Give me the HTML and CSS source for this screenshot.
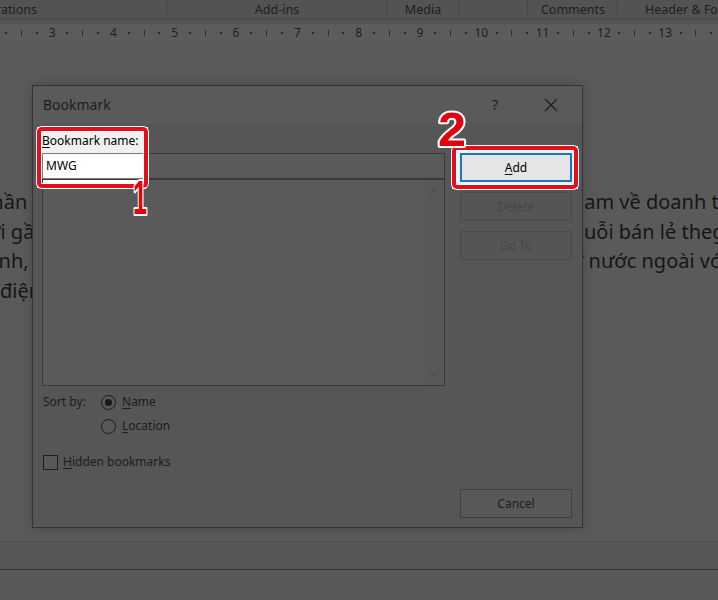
FILE: index.html
```html
<!DOCTYPE html>
<html lang="vi">
<head>
<meta charset="utf-8">
<title>Bookmark</title>
<link rel="stylesheet" href="styles.css">
</head>
<body>
<div class="app">
  <div class="ribbon">
    <div class="grp g1"><span class="grp-label cut">rations</span></div>
    <div class="grp g2"><span class="grp-label">Add-ins</span></div>
    <div class="grp g3"><span class="grp-label">Media</span></div>
    <div class="grp g4"></div>
    <div class="grp g5"><span class="grp-label">Comments</span></div>
    <div class="grp g6"><span class="grp-label">Header &amp; Footer</span></div>
  </div>
  <div class="ribbon-gap"></div>
  <div class="ruler">
    <span class="rc d"></span><span class="rc t"></span><span class="rc d"></span><span class="rc n">3</span>
    <span class="rc d"></span><span class="rc t"></span><span class="rc d"></span><span class="rc n">4</span>
    <span class="rc d"></span><span class="rc t"></span><span class="rc d"></span><span class="rc n">5</span>
    <span class="rc d"></span><span class="rc t"></span><span class="rc d"></span><span class="rc n">6</span>
    <span class="rc d"></span><span class="rc t"></span><span class="rc d"></span><span class="rc n">7</span>
    <span class="rc d"></span><span class="rc t"></span><span class="rc d"></span><span class="rc n">8</span>
    <span class="rc d"></span><span class="rc t"></span><span class="rc d"></span><span class="rc n">9</span>
    <span class="rc d"></span><span class="rc t"></span><span class="rc d"></span><span class="rc n">10</span>
    <span class="rc d"></span><span class="rc t"></span><span class="rc d"></span><span class="rc n">11</span>
    <span class="rc d"></span><span class="rc t"></span><span class="rc d"></span><span class="rc n">12</span>
    <span class="rc d"></span><span class="rc t"></span><span class="rc d"></span><span class="rc n">13</span>
    <span class="rc d"></span><span class="rc t"></span><span class="rc d"></span>
  </div>
  <div class="doc">
    <div class="line"><span class="lt l1">phần thị trường</span><span class="rt r1">Nam về doanh thu</span></div>
    <div class="line"><span class="lt l2">lợi gần</span><span class="rt r2">chuỗi bán lẻ thegioididong</span></div>
    <div class="line"><span class="lt l3">doanh, lợi</span><span class="rt r3">ở nước ngoài với</span></div>
    <div class="line"><span class="lt l4">điện</span><span class="rt"></span></div>
  </div>
  <div class="status"></div>
  <div class="foot"></div>
</div>

<div class="dialog">
  <div class="spot spot1"></div>
  <div class="spot spot2"></div>
  <div class="titlebar">
    <span class="title">Bookmark</span>
    <span class="tb-btn help">?</span>
    <span class="tb-btn close"><svg width="14" height="14" viewBox="0 0 14 14"><path d="M1 1L13 13M13 1L1 13" stroke="#1d1d1d" stroke-width="1.1" fill="none"/></svg></span>
  </div>
  <div class="dbody">
    <div class="left">
      <div class="name-label"><u>B</u>ookmark name:</div>
      <div class="name-field">MWG</div>
      <div class="list">
        <div class="list-area"></div>
        <div class="scroll">
          <svg width="9" height="5" viewBox="0 0 9 5"><path d="M0.5 4.5L4.5 0.5L8.5 4.5" stroke="#444" fill="none"/></svg>
          <svg width="9" height="5" viewBox="0 0 9 5"><path d="M0.5 0.5L4.5 4.5L8.5 0.5" stroke="#444" fill="none"/></svg>
        </div>
      </div>
      <div class="sort">
        <span class="sort-label">Sort by:</span>
        <div class="radios">
          <div class="radio"><span class="rb on"></span><span><u>N</u>ame</span></div>
          <div class="radio"><span class="rb"></span><span><u>L</u>ocation</span></div>
        </div>
      </div>
      <div class="check"><span class="cb"></span><span><u>H</u>idden bookmarks</span></div>
    </div>
    <div class="right">
      <div class="btn add"><span><u>A</u>dd</span></div>
      <div class="btn dis">Delete</div>
      <div class="btn dis">Go To</div>
      <div class="btn cancel">Cancel</div>
    </div>
  </div>
</div>

<div class="frame frame1"></div>
<div class="frame frame2"></div>

<svg class="marks" width="718" height="600" viewBox="0 0 718 600">
  <text class="mark" x="133" y="214" textLength="14" lengthAdjust="spacingAndGlyphs">1</text>
  <text class="mark" x="438" y="146" textLength="28" lengthAdjust="spacingAndGlyphs">2</text>
</svg>
</body>
</html>
```

FILE: styles.css
```css
html, body {
  margin: 0;
  padding: 0;
  overflow: hidden;
}

body {
  width: 718px;
  height: 600px;
  position: relative;
  background: #5a5a5a;
  font-family: "Noto Sans", "Open Sans", sans-serif;
  color: #1d1d1d;
}

.app {
  display: flex;
  flex-direction: column;
  height: 600px;
}

/* ribbon */
.ribbon {
  display: flex;
  height: 19px;
  background: #535353;
  border-bottom: 1px solid #4a4a4a;
  font-size: 12.5px;
  line-height: 19px;
  color: #1f1f1f;
  white-space: nowrap;
  overflow: hidden;
}

.grp {
  flex: 0 0 auto;
  text-align: center;
  background: linear-gradient(#464646, #464646) right top / 1px 15px no-repeat;
}

.g1 { width: 167px; text-align: left; }
.g2 { width: 220px; }
.g3 { width: 72px; }
.g4 { width: 69px; }
.g5 { width: 90px; }
.g6 { flex: 1; text-align: left; padding-left: 27px; background: none; }

.cut { display: inline-block; margin-left: -4px; }

.ribbon-gap {
  height: 4px;
  background: #565656;
}

/* ruler */
.ruler {
  display: flex;
  height: 17px;
  background: #5c5c5c;
  margin-left: -1.56px;
  color: #1f1f1f;
  font-size: 12px;
}

.rc {
  flex: 0 0 15.33px;
  display: flex;
  align-items: center;
  justify-content: center;
}

.rc.d::before {
  content: "";
  width: 2px;
  height: 2px;
  background: #2e2e2e;
}

.rc.t::before {
  content: "";
  width: 1px;
  height: 6px;
  background: #2e2e2e;
}

.rc.n {
  line-height: 17px;
}

/* document */
.doc {
  height: 500px;
  box-sizing: border-box;
  padding-top: 146px;
  background: #5a5a5a;
  font-size: 20px;
  color: #161616;
}

.line {
  display: grid;
  grid-template-columns: 583px minmax(0, 1fr);
  height: 29.5px;
  line-height: 29.5px;
  white-space: nowrap;
}

.lt, .rt { display: block; }
.l1 { margin-left: -21px; }
.l2 { margin-left: -17px; }
.l3 { margin-left: -37px; }
.l4 { margin-left: 0; }
.r1 { margin-left: -14px; }
.r2 { margin-left: -21px; }
.r3 { margin-left: -12px; }

.status {
  height: 27px;
  background: #575757;
  border-top: 1px solid #4f4f4f;
  border-bottom: 1px solid #333;
}

.foot {
  flex: 1;
  background: #595959;
}

/* dialog */
.dialog {
  position: absolute;
  left: 32px;
  top: 85px;
  width: 551px;
  height: 443px;
  box-sizing: border-box;
  border: 1px solid #353535;
  background: #565656;
  box-shadow: 0 0 10px rgba(0, 0, 0, 0.22);
  z-index: 10;
  display: flex;
  flex-direction: column;
  font-size: 12px;
}

.spot {
  position: absolute;
  background: #f0f0f0;
  z-index: 0;
}

.spot1 { left: 4px; top: 41px; width: 111px; height: 61px; }
.spot2 { left: 419px; top: 60px; width: 126px; height: 43px; }

.titlebar {
  position: relative;
  z-index: 1;
  height: 37px;
  flex: 0 0 37px;
  background: #5a5a5a;
  display: flex;
  align-items: center;
  padding: 0 8px 0 10px;
  gap: 18px;
}

.title {
  flex: 1;
  font-size: 14px;
  color: #1d1d1d;
}

.tb-btn {
  display: flex;
  align-items: center;
  justify-content: center;
  height: 30px;
}

.help { width: 30px; font-size: 14px; }
.close { width: 46px; }

.dbody {
  position: relative;
  z-index: 1;
  flex: 1;
  display: grid;
  grid-template-columns: 403px 1fr;
  column-gap: 15px;
  padding: 10px 10px 9px 9px;
}

.left {
  display: flex;
  flex-direction: column;
}

.name-label {
  line-height: 16px;
  height: 16px;
  margin-bottom: 4px;
  color: #000;
}

u { text-underline-offset: 2px; text-decoration-thickness: 1px; }

.name-field {
  height: 26px;
  box-sizing: border-box;
  border: 1px solid;
  border-image: linear-gradient(to right, #7a7a7a 104px, #393939 104px) 1;
  background: linear-gradient(to right, #fff 103px, #5a5a5a 103px);
  padding-left: 3px;
  font-size: 12px;
  line-height: 24px;
  color: #000;
}

.list {
  height: 207px;
  box-sizing: border-box;
  border: 1px solid #3a3a3a;
  background: linear-gradient(#fff, #fff) 0 0 / 103px 9px no-repeat, #5a5a5a;
  display: flex;
}

.list-area { flex: 1; }

.scroll {
  width: 18px;
  margin-right: 1px;
  background: #585858;
  display: flex;
  flex-direction: column;
  justify-content: space-between;
  align-items: center;
  padding: 9px 0;
}

.sort {
  display: flex;
  margin-top: 8px;
}

.sort-label {
  width: 59px;
  line-height: 16px;
  padding-left: 1px;
  box-sizing: border-box;
}

.radios {
  display: flex;
  flex-direction: column;
  gap: 8px;
}

.radio, .check {
  display: flex;
  align-items: center;
  height: 16px;
  line-height: 16px;
}

.rb {
  width: 15px;
  height: 15px;
  box-sizing: border-box;
  border: 1px solid #1a1a1a;
  border-radius: 50%;
  background: #585858;
  margin: 0 6px 0 0;
  display: flex;
  align-items: center;
  justify-content: center;
}

.rb.on::before {
  content: "";
  width: 7px;
  height: 7px;
  border-radius: 50%;
  background: #1a1a1a;
}

.check {
  margin-top: 20px;
}

.cb {
  width: 15px;
  height: 15px;
  box-sizing: border-box;
  border: 1px solid #1e1e1e;
  background: #585858;
  margin: 0 5px 0 1px;
}

.right {
  display: flex;
  flex-direction: column;
  gap: 10px;
  padding-top: 20px;
}

.btn {
  height: 29px;
  box-sizing: border-box;
  border: 1px solid #3f3f3f;
  background: #535353;
  display: flex;
  align-items: center;
  justify-content: center;
  color: #1d1d1d;
}

.btn.add {
  border: 2px solid #1c72c4;
  background: #e5e5e5;
  color: #000;
}

.btn.dis {
  border-color: #4a4a4a;
  background: #555;
  color: #474747;
}

.btn.cancel {
  margin-top: auto;
  background: #585858;
}

/* annotation frames */
.frame {
  position: absolute;
  box-sizing: border-box;
  border: 4px solid #e1101c;
  border-radius: 5px;
  box-shadow: 0 0 0 1px #fff, inset 0 0 0 1px #fff;
  z-index: 20;
}

.frame1 { left: 37px; top: 127px; width: 111px; height: 61px; }
.frame2 { left: 452px; top: 146px; width: 126px; height: 43px; }

.marks {
  position: absolute;
  left: 0;
  top: 0;
  z-index: 30;
  pointer-events: none;
}

.mark {
  font-family: "Liberation Sans", Arial, sans-serif;
  font-weight: bold;
  font-size: 48px;
  fill: #e4000f;
  stroke: #fff;
  stroke-width: 4px;
  stroke-linejoin: round;
  paint-order: stroke;
}
```
